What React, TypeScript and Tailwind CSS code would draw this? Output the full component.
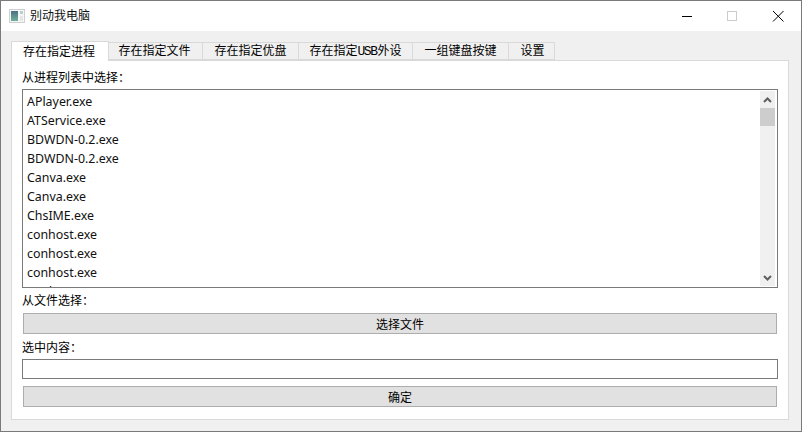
const tabs = [
  { label: <>存在指定进程</>, key: "a", w: "w-[98px] pr-[2px]", active: true },
  { label: <>存在指定文件</>, key: "b", w: "w-[94px] pr-[2px]" },
  { label: <>存在指定优盘</>, key: "c", w: "w-[96px]" },
  { label: <>存在指定<span className="font-['Liberation_Mono',monospace] text-[13px] tracking-[-1.4px] pr-[1px]">USB</span>外设</>, key: "d", w: "w-[114px]" },
  { label: <>一组键盘按键</>, key: "e", w: "w-[96px]" },
  { label: <>设置</>, key: "f", w: "w-[46px] pl-[2px]" },
];
const items = ["APlayer.exe", "ATService.exe", "BDWDN-0.2.exe", "BDWDN-0.2.exe", "Canva.exe", "Canva.exe", "ChsIME.exe", "conhost.exe", "conhost.exe", "conhost.exe", "cmd.exe"];

export default function App() {
  return (
    <div className="w-[802px] h-[432px] border border-[#7a7a7a] bg-[#f0f0f0] flex flex-col overflow-hidden text-[12px] leading-[16px] text-black font-['Noto_Sans','Noto_Sans_CJK_SC',sans-serif]">
      <div className="h-[30px] bg-white flex items-center shrink-0">
        <svg width="16" height="16" viewBox="0 0 16 16" className="ml-[8px]">
          <rect x="0.5" y="1.5" width="15" height="13" fill="#f6f6f6" stroke="#cfcfcf" />
          <defs>
            <linearGradient id="pane" x1="0" y1="0" x2="0" y2="1">
              <stop offset="0" stopColor="#4a6f86" />
              <stop offset="1" stopColor="#6fb09a" />
            </linearGradient>
          </defs>
          <rect x="2" y="3" width="7" height="10" fill="url(#pane)" />
          <rect x="11" y="3" width="3" height="3" fill="#b5d2cc" />
          <rect x="11" y="8" width="3" height="5" fill="#e2e8e6" />
        </svg>
        <span className="ml-[5px] text-[#111]">别动我电脑</span>
        <div className="ml-auto flex items-center">
          <svg width="46" height="30" viewBox="0 0 46 30"><path d="M19 15.5H29" stroke="#000" /></svg>
          <svg width="46" height="30" viewBox="0 0 46 30"><rect x="18.5" y="10.5" width="9" height="9" fill="none" stroke="#cccccc" /></svg>
          <svg width="46" height="30" viewBox="0 0 46 30"><path d="M18 10L28.5 20.5M28.5 10L18 20.5" stroke="#000" /></svg>
        </div>
      </div>
      <div className="flex items-end pl-[10px] pt-[10px] h-[29px] shrink-0">
        {tabs.map((t) => (
          <div
            key={t.key}
            className={
              t.active
                ? `${t.w} h-[20px] -mb-px relative z-10 bg-white border border-b-0 border-[#d9d9d9] flex items-center justify-center`
                : `${t.w} h-[18px] bg-[#f0f0f0] border border-l-0 border-[#d9d9d9] flex items-center justify-center`
            }
          >
            <span>{t.label}</span>
          </div>
        ))}
      </div>
      <div className="ml-[10px] mr-[12px] h-[360px] bg-white border border-[#d9d9d9] pl-[10px] pr-[10px] pt-[9px] flex flex-col">
        <div className="h-[16px]">从进程列表中选择：</div>
        <div className="mt-[3px] h-[199px] border border-[#7a7a7a] flex pt-px pl-px">
          <div className="flex-1 overflow-hidden px-[3px] pt-px">
            {items.map((it, i) => (
              <div key={i} className="h-[19px] flex items-center text-[12.4px] text-[#111]">{it}</div>
            ))}
          </div>
          <div className="w-[15px] mr-[2px] mb-px bg-[#f0f0f0] flex flex-col">
            <div className="h-[17px] flex items-center justify-center">
              <svg width="9" height="6" viewBox="0 0 9 6"><path d="M1 5L4.5 1.5L8 5" fill="none" stroke="#606060" strokeWidth="2" /></svg>
            </div>
            <div className="h-[18px] bg-[#cdcdcd]" />
            <div className="flex-1" />
            <div className="h-[17px] flex items-center justify-center">
              <svg width="9" height="6" viewBox="0 0 9 6"><path d="M1 1L4.5 4.5L8 1" fill="none" stroke="#606060" strokeWidth="2" /></svg>
            </div>
          </div>
        </div>
        <div className="mt-[5px] h-[16px]">从文件选择：</div>
        <div className="mt-[4px] mx-px h-[21px] pt-[2px] border border-[#adadad] bg-[#e1e1e1] flex items-center justify-center">选择文件</div>
        <div className="mt-[6px] h-[16px]">选中内容：</div>
        <div className="mt-[3px] h-[20px] border border-[#7a7a7a] bg-white" />
        <div className="mt-[7px] mx-px h-[21px] pt-[2px] border border-[#adadad] bg-[#e1e1e1] flex items-center justify-center">确定</div>
      </div>
    </div>
  );
}
